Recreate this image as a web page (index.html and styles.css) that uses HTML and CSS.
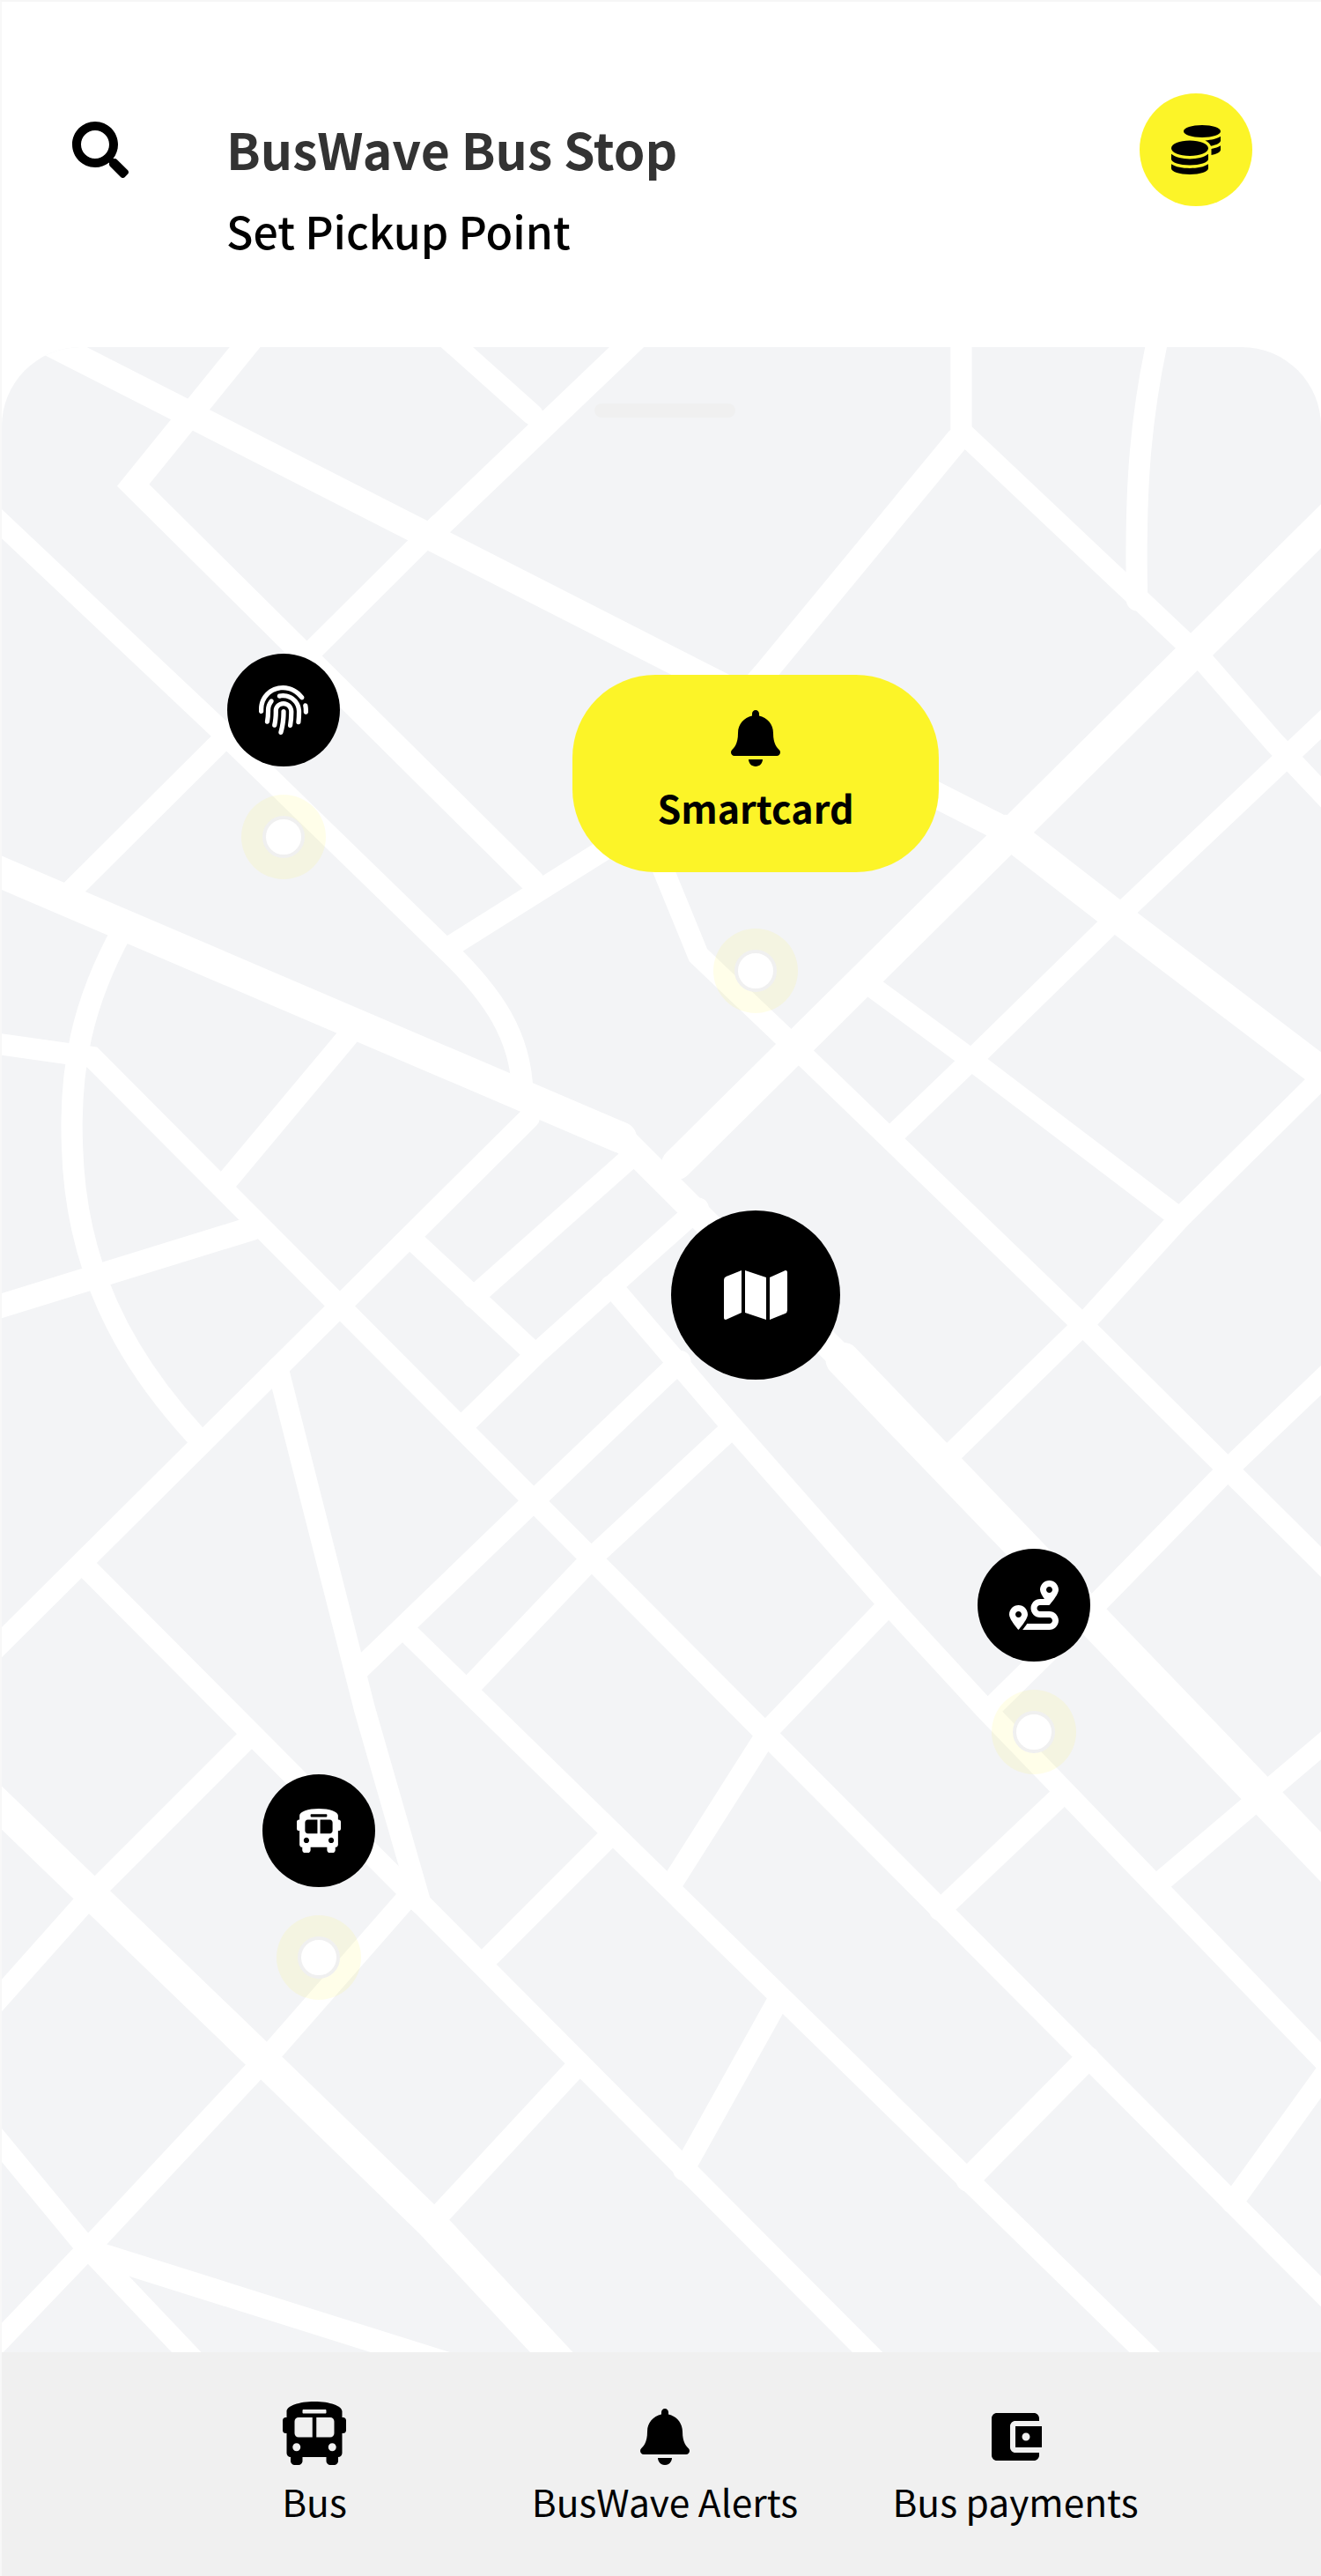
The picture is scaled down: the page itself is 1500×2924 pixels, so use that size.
FILE: index.html
```html
<!DOCTYPE html>
<html lang="en">
<head>
    <meta charset="UTF-8">
    <title>BusWave Bus Stop</title>
    <link rel="stylesheet" href="styles.css">
</head>
<body>
    <div class="screen">
        <div class="header">
            <svg class="search-icon" viewBox="0 0 512 512"><path d="M505 442.7L405.3 343c-4.5-4.5-10.6-7-17-7H372c27.6-35.3 44-79.7 44-128C416 93.1 322.9 0 208 0S0 93.1 0 208s93.1 208 208 208c48.3 0 92.7-16.4 128-44v16.3c0 6.4 2.5 12.5 7 17l99.7 99.7c9.4 9.4 24.6 9.4 33.9 0l28.3-28.3c9.4-9.4 9.4-24.6.1-34zM208 336c-70.7 0-128-57.2-128-128 0-70.7 57.2-128 128-128 70.7 0 128 57.2 128 128 0 70.7-57.2 128-128 128z"/></svg>
            <div class="titles">
                <h1>BusWave Bus Stop</h1>
                <p>Set Pickup Point</p>
            </div>
            <div class="coins">
                <svg viewBox="0 0 512 512"><path d="M0 405.3V448c0 35.3 86 64 192 64s192-28.7 192-64v-42.7C342.7 434.4 267.2 448 192 448S41.3 434.4 0 405.3zM320 128c106 0 192-28.7 192-64S426 0 320 0 128 28.7 128 64s86 64 192 64zM0 300.4V352c0 35.3 86 64 192 64s192-28.7 192-64v-51.6c-41.3 34-116.9 51.6-192 51.6S41.3 334.4 0 300.4zm416 11c57.3-11.1 96-31.7 96-55.4v-42.7c-23.2 16.4-57.3 27.6-96 34.5v63.6zM192 160C86 160 0 195.8 0 240s86 80 192 80 192-35.8 192-80-86-80-192-80zm219.3 56.3c60-10.8 100.7-32 100.7-56.3v-42.7c-35.5 25.1-96.5 38.6-160.7 41.8 29.5 14.3 51.2 33.5 60 57.2z"/></svg>
            </div>
        </div>

        <div class="map">
            <svg class="roads" viewBox="0 211 804 1221" preserveAspectRatio="none">
                <g class="road-s">
                    <path d="M268 202L324 252"/>
                    <path d="M275 575L385 506"/>
                    <path d="M38 547L267 319"/>
                    <path d="M-8 310L133 443L272 578C300 605 317 630 318 664"/>
                    <path d="M75 565C50 610 42 650 44 698C46 770 75 825 118 872"/>
                    <path d="M-8 634L56 643L812 1402"/>
                    <path d="M135 722L212 630"/>
                    <path d="M252 755L325 823"/>
                    <path d="M385 703L288 789"/>
                    <path d="M425 735L328 822L283 866"/>
                    <path d="M414 828L330 908L219 1015"/>
                    <path d="M445 869L364 944L287 1025"/>
                    <path d="M372 782L445 867L541 976L600 1040L812 1260"/>
                    <path d="M541 976L469 1051L410 1144"/>
                    <path d="M373 1115L294 1194"/>
                    <path d="M150 1058L58 1150L-8 1224"/>
                    <path d="M250 1152L164 1250L61 1360L-8 1432"/>
                    <path d="M352 1256L263 1352"/>
                    <path d="M474 1216L416 1320"/>
                    <path d="M812 1254L750 1340"/>
                    <path d="M646 1092L572 1162"/>
                    <path d="M812 1055L706 1145"/>
                    <path d="M51 952L540 1443"/>
                    <path d="M250 995L708 1442"/>
                    <path d="M-8 1294L49 1363L124 1442"/>
                    <path d="M169 832L222 1040L256 1158"/>
                    <path d="M585 200L585 265"/>
                    <path d="M706 200C692 260 691 310 692 365"/>
                    <path d="M588 265L729 398L776 452L812 490"/>
                    <path d="M812 433L684 554L596 640L545 689"/>
                    <path d="M525 596L585 640L718 741"/>
                    <path d="M487 640L659 806L812 958"/>
                    <path d="M805 655L718 741L659 806L574 889"/>
                    <path d="M812 832L749 892L667 976L602 1040"/>
                    <path d="M400 520L425 581L487 640"/>
                    <path d="M322 680L-8 1008"/>
                </g>
                <g class="road-m">
                    <path d="M158 200L81 295L324 536"/>
                    <path d="M395 198L262 325"/>
                    <path d="M583 267L465 410L430 450"/>
                    <path d="M-8 797L154 747"/>
                    <path d="M662 1252L589 1326"/>
                    <path d="M59 1371L285 1442"/>
                </g>
                <g class="road-w">
                    <path d="M-8 189L612 505"/>
                    <path d="M378 692L513 827"/>
                </g>
                <g class="road-l">
                    <path d="M612 505L679 557L812 658"/>
                    <path d="M812 312L412 708"/>
                    <path d="M-8 527L378 692"/>
                    <path d="M-8 1091L159 1252L262 1352L346 1442"/>
                </g>
                <g class="road-x">
                    <path d="M513 827L812 1138"/>
                </g>
            </svg>

            <div class="handle"></div>

            <div class="stop stop-finger"><span></span></div>
            <div class="stop stop-smart"><span></span></div>
            <div class="stop stop-route"><span></span></div>
            <div class="stop stop-bus"><span></span></div>

            <div class="pin pin-finger">
                <svg viewBox="0 0 512 512"><path d="M256.12 245.96c-13.25 0-24 10.74-24 24 1.14 72.25-8.14 141.9-27.7 211.55-2.73 9.72 2.15 30.49 23.12 30.49 10.48 0 20.11-6.92 23.09-17.52 13.53-47.91 31.04-125.41 29.48-224.52.01-13.25-10.73-24-23.99-24zm-.86-81.73C194 164.16 151.25 211.3 152.1 265.32c.75 47.94-3.75 95.91-13.37 142.55-2.69 12.98 5.67 25.69 18.64 28.36 13.05 2.67 25.67-5.66 28.36-18.64 10.34-50.09 15.17-101.58 14.37-153.02-.41-25.95 19.92-52.49 54.45-52.34 31.31.47 57.15 25.34 57.62 55.47.77 48.05-2.81 96.33-10.61 143.55-2.17 13.06 6.69 25.42 19.76 27.58 19.97 3.33 26.81-15.1 27.58-19.77 8.28-50.03 12.06-101.21 11.27-152.11-.88-55.8-47.94-101.88-104.91-102.72zm-110.69-19.78c-10.3-8.34-25.37-6.8-33.76 3.48-25.62 31.5-39.39 71.28-38.75 112 .59 37.58-2.47 75.27-9.11 112.05-2.34 13.05 6.31 25.53 19.36 27.89 20.11 3.5 27.07-14.81 27.89-19.36 7.19-39.84 10.5-80.66 9.86-121.33-.47-29.88 9.2-57.88 28-80.97 8.35-10.28 6.79-25.39-3.49-33.76zm109.47-62.33c-15.41-.41-30.87 1.44-45.78 4.97-12.89 3.06-20.87 15.98-17.83 28.89 3.06 12.89 16 20.83 28.89 17.83 11.05-2.61 22.47-3.77 34-3.69 75.43 1.13 137.73 61.5 138.88 134.58.59 37.88-1.28 76.11-5.58 113.63-1.5 13.17 7.95 25.08 21.11 26.58 16.72 1.95 25.51-11.88 26.58-21.11a929.06 929.06 0 0 0 5.89-119.85c-1.56-98.75-85.07-180.33-186.16-181.83zm252.07 121.45c-2.86-12.92-15.51-21.2-28.61-18.27-12.94 2.86-21.12 15.66-18.26 28.61 4.71 21.41 4.91 37.41 4.7 61.6-.11 13.27 10.55 24.09 23.8 24.2h.2c13.17 0 23.89-10.61 24-23.8.18-22.18.4-44.11-5.83-72.34zm-40.12-90.72C417.29 43.46 337.6 1.29 252.81.02 183.02-.82 118.47 24.91 70.46 72.94 24.09 119.37-.9 181.04.14 246.65l-.12 21.47c-.39 13.25 10.03 24.31 23.28 24.69.23.02.48.02.72.02 12.92 0 23.59-10.3 23.97-23.3l.16-23.64c-.83-52.5 19.16-101.86 56.28-139 38.76-38.8 91.34-59.67 147.68-58.86 69.45 1.03 134.73 35.56 174.62 92.39 7.61 10.86 22.56 13.45 33.42 5.86 10.84-7.62 13.46-22.59 5.84-33.43z"/></svg>
            </div>

            <div class="pin pin-map">
                <svg viewBox="0 0 576 512"><path d="M0 117.66v346.32c0 11.32 11.43 19.06 21.94 14.86L160 416V32L20.12 87.95A32.006 32.006 0 0 0 0 117.66zM192 416l192 64V96L192 32v384zM554.06 33.16L416 96v384l139.88-55.95A31.996 31.996 0 0 0 576 394.34V48.02c0-11.32-11.43-19.06-21.94-14.86z"/></svg>
            </div>

            <div class="pin pin-route">
                <svg viewBox="0 0 512 512"><path d="M416 320h-96c-17.6 0-32-14.4-32-32s14.4-32 32-32h96s96-107 96-160-43-96-96-96-96 43-96 96c0 25.5 22.2 63.4 45.3 96H320c-52.9 0-96 43.1-96 96s43.1 96 96 96h96c17.6 0 32 14.4 32 32s-14.4 32-32 32H185.5c-16 24.8-33.8 47.7-47.3 64H416c52.9 0 96-43.1 96-96s-43.1-96-96-96zm0-256c17.7 0 32 14.3 32 32s-14.3 32-32 32-32-14.3-32-32 14.3-32 32-32zM96 256c-53 0-96 43-96 96s96 160 96 160 96-107 96-160-43-96-96-96zm0 128c-17.7 0-32-14.3-32-32s14.3-32 32-32 32 14.3 32 32-14.3 32-32 32z"/></svg>
            </div>

            <div class="pin pin-bus">
                <svg viewBox="0 0 512 512"><path d="M488 128h-8V80c0-44.8-99.2-80-224-80S32 35.2 32 80v48h-8c-13.25 0-24 10.74-24 24v80c0 13.25 10.75 24 24 24h8v160c0 17.67 14.33 32 32 32v32c0 17.67 14.33 32 32 32h32c17.67 0 32-14.33 32-32v-32h192v32c0 17.67 14.33 32 32 32h32c17.67 0 32-14.33 32-32v-32c17.67 0 32-14.33 32-32V256h8c13.25 0 24-10.75 24-24v-80c0-13.26-10.75-24-24-24zM160 72c0-4.42 3.58-8 8-8h176c4.42 0 8 3.58 8 8v16c0 4.42-3.58 8-8 8H168c-4.42 0-8-3.58-8-8V72zm-48 328c-17.67 0-32-14.33-32-32s14.33-32 32-32 32 14.33 32 32-14.33 32-32 32zm128-112H128c-17.67 0-32-14.33-32-32v-96c0-17.67 14.33-32 32-32h112v160zm32 0V128h112c17.67 0 32 14.33 32 32v96c0 17.67-14.33 32-32 32H272zm128 112c-17.67 0-32-14.33-32-32s14.33-32 32-32 32 14.33 32 32-14.33 32-32 32z"/></svg>
            </div>

            <div class="smartcard">
                <svg viewBox="0 0 448 512"><path d="M224 512c35.32 0 63.97-28.65 63.97-64H160.03c0 35.35 28.65 64 63.97 64zm215.39-149.71c-19.32-20.76-55.47-51.99-55.47-154.29 0-77.7-54.48-139.9-127.94-155.16V32c0-17.67-14.32-32-31.98-32s-31.98 14.33-31.98 32v20.84C118.56 68.1 64.08 130.3 64.08 208c0 102.3-36.15 133.53-55.47 154.29-6 6.45-8.66 14.16-8.61 21.71.11 16.4 12.98 32 32.1 32h383.8c19.12 0 32-15.6 32.1-32 .05-7.55-2.61-15.27-8.61-21.71z"/></svg>
                <span>Smartcard</span>
            </div>
        </div>

        <div class="nav">
            <div class="nav-item">
                <div class="nav-icon">
                    <svg class="icon-bus" viewBox="0 0 512 512"><path d="M488 128h-8V80c0-44.8-99.2-80-224-80S32 35.2 32 80v48h-8c-13.25 0-24 10.74-24 24v80c0 13.25 10.75 24 24 24h8v160c0 17.67 14.33 32 32 32v32c0 17.67 14.33 32 32 32h32c17.67 0 32-14.33 32-32v-32h192v32c0 17.67 14.33 32 32 32h32c17.67 0 32-14.33 32-32v-32c17.67 0 32-14.33 32-32V256h8c13.25 0 24-10.75 24-24v-80c0-13.26-10.75-24-24-24zM160 72c0-4.42 3.58-8 8-8h176c4.42 0 8 3.58 8 8v16c0 4.42-3.58 8-8 8H168c-4.42 0-8-3.58-8-8V72zm-48 328c-17.67 0-32-14.33-32-32s14.33-32 32-32 32 14.33 32 32-14.33 32-32 32zm128-112H128c-17.67 0-32-14.33-32-32v-96c0-17.67 14.33-32 32-32h112v160zm32 0V128h112c17.67 0 32 14.33 32 32v96c0 17.67-14.33 32-32 32H272zm128 112c-17.67 0-32-14.33-32-32s14.33-32 32-32 32 14.33 32 32-14.33 32-32 32z"/></svg>
                </div>
                <span>Bus</span>
            </div>
            <div class="nav-item">
                <div class="nav-icon">
                    <svg class="icon-bell" viewBox="0 0 448 512"><path d="M224 512c35.32 0 63.97-28.65 63.97-64H160.03c0 35.35 28.65 64 63.97 64zm215.39-149.71c-19.32-20.76-55.47-51.99-55.47-154.29 0-77.7-54.48-139.9-127.94-155.16V32c0-17.67-14.32-32-31.98-32s-31.98 14.33-31.98 32v20.84C118.56 68.1 64.08 130.3 64.08 208c0 102.3-36.15 133.53-55.47 154.29-6 6.45-8.66 14.16-8.61 21.71.11 16.4 12.98 32 32.1 32h383.8c19.12 0 32-15.6 32.1-32 .05-7.55-2.61-15.27-8.61-21.71z"/></svg>
                </div>
                <span>BusWave Alerts</span>
            </div>
            <div class="nav-item">
                <div class="nav-icon">
                    <svg class="icon-wallet" viewBox="0 0 24 24"><path d="M21 18v1c0 1.1-.9 2-2 2H5c-1.11 0-2-.9-2-2V5c0-1.1.89-2 2-2h14c1.1 0 2 .9 2 2v1h-9c-1.11 0-2 .9-2 2v8c0 1.1.89 2 2 2h9zm-9-2h10V8H12v8zm4-2.5c-.83 0-1.5-.67-1.5-1.5s.67-1.5 1.5-1.5 1.5.67 1.5 1.5-.67 1.5-1.5 1.5z"/></svg>
                </div>
                <span>Bus payments</span>
            </div>
        </div>
    </div>
</body>
</html>
```

FILE: styles.css
```css
* {
    box-sizing: border-box;
}
body {
    margin: 0;
    background-color: #fff;
    font-family: "Noto Sans CJK KR", "Noto Sans", sans-serif;
    color: #000;
}
.screen {
    display: flex;
    flex-direction: column;
    height: 2924px;
    border-top: 2px solid #f6f6f6;
    border-left: 2px solid #f8f8f8;
}

/* header */
.header {
    display: flex;
    align-items: center;
    height: 392px;
    padding: 0 78px 56px 80px;
}
.search-icon {
    width: 64px;
    height: 64px;
    margin-right: 111px;
}
.titles {
    flex: 1;
    display: flex;
    flex-direction: column;
    gap: 22px;
    margin-top: 84px;
}
h1 {
    margin: 0;
    font-size: 57px;
    line-height: 76px;
    font-weight: 700;
    color: #333;
}
.titles p {
    margin: 0;
    font-size: 50px;
    line-height: 66px;
    font-weight: 500;
}
.coins {
    width: 128px;
    height: 128px;
    border-radius: 50%;
    background-color: #fcf428;
    display: flex;
    justify-content: center;
    align-items: center;
}
.coins svg {
    width: 56px;
    height: 56px;
}

/* map */
.map {
    position: relative;
    flex: 1;
    overflow: hidden;
    background-color: #f3f4f6;
    border-radius: 90px 90px 0 0;
}
.roads {
    position: absolute;
    left: -2px;
    top: 0;
    width: 1500px;
    height: 2278px;
    fill: none;
    stroke: #fff;
    stroke-linecap: round;
}
.road-s {
    stroke-width: 13;
}
.road-m {
    stroke-width: 14.5;
}
.road-w {
    stroke-width: 16;
}
.road-l {
    stroke-width: 19;
}
.road-x {
    stroke-width: 21;
}
.handle {
    position: absolute;
    left: 673px;
    top: 64px;
    width: 160px;
    height: 16px;
    border-radius: 8px;
    background-color: #f0f0f0;
}
.stop {
    position: absolute;
    width: 96px;
    height: 96px;
    border-radius: 50%;
    background-color: rgba(252, 244, 40, 0.1);
    display: flex;
    justify-content: center;
    align-items: center;
}
.stop span {
    width: 48px;
    height: 48px;
    border-radius: 50%;
    background-color: #fff;
    border: 4px solid #f0f0f0;
}
.stop-finger { left: 272px; top: 508px; }
.stop-smart { left: 808px; top: 660px; }
.stop-route { left: 1124px; top: 1524px; }
.stop-bus { left: 312px; top: 1780px; }

.pin {
    position: absolute;
    width: 128px;
    height: 128px;
    border-radius: 50%;
    background-color: #000;
    display: flex;
    justify-content: center;
    align-items: center;
    fill: #fff;
}
.pin svg {
    width: 56px;
    height: 56px;
}
.pin-finger { left: 256px; top: 348px; }
.pin-route { left: 1108px; top: 1364px; }
.pin-bus { left: 296px; top: 1620px; }
.pin-bus svg {
    width: 50px;
    height: 50px;
}
.pin-map {
    left: 760px;
    top: 980px;
    width: 192px;
    height: 192px;
}
.pin-map svg {
    width: 72px;
    height: 64px;
}
.smartcard {
    position: absolute;
    left: 648px;
    top: 372px;
    width: 416px;
    height: 224px;
    border-radius: 94px;
    background-color: #fcf428;
    display: flex;
    flex-direction: column;
    align-items: center;
    padding-top: 40px;
}
.smartcard svg {
    width: 56px;
    height: 64px;
}
.smartcard span {
    margin-top: 16px;
    font-size: 43px;
    line-height: 60px;
    font-weight: 700;
}

/* bottom nav */
.nav {
    display: grid;
    grid-template-columns: repeat(3, 1fr);
    height: 254px;
    padding: 56px 148px 0 156px;
    background-color: #f0f0f0;
}
.nav-item {
    display: flex;
    flex-direction: column;
    align-items: center;
    font-size: 42.5px;
    line-height: 60px;
}
.nav-icon {
    height: 72px;
    margin-bottom: 11px;
    display: flex;
    justify-content: center;
    align-items: flex-start;
}
.icon-bus {
    width: 72px;
    height: 72px;
}
.icon-bell {
    width: 56px;
    height: 64px;
    margin-top: 8px;
}
.icon-wallet {
    width: 72px;
    height: 72px;
    margin-top: 4px;
}
```
